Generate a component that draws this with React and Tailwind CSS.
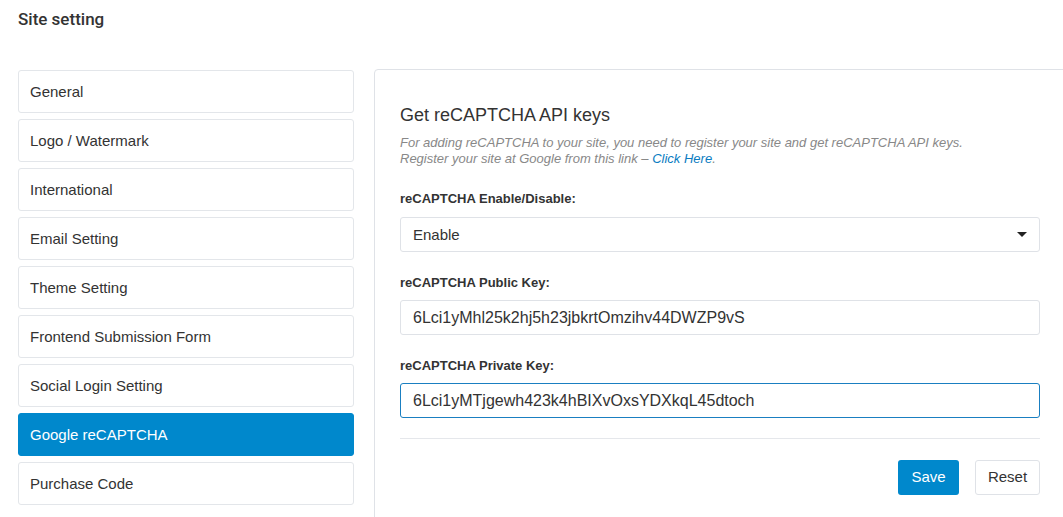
import { useState } from 'react'

const menu = [
  'General',
  'Logo / Watermark',
  'International',
  'Email Setting',
  'Theme Setting',
  'Frontend Submission Form',
  'Social Login Setting',
  'Google reCAPTCHA',
  'Purchase Code',
]

export default function App() {
  const [active, setActive] = useState('Google reCAPTCHA')
  const [enabled, setEnabled] = useState('Enable')
  const [publicKey, setPublicKey] = useState('6Lci1yMhl25k2hj5h23jbkrtOmzihv44DWZP9vS')
  const [privateKey, setPrivateKey] = useState('6Lci1yMTjgewh423k4hBIXvOxsYDXkqL45dtoch')

  return (
    <div className="w-[1063px] h-[517px] overflow-hidden bg-white font-['Liberation_Sans',Arial,sans-serif] text-[#333]">
      <h1 className="pl-[18px] pt-[8px] h-[69px] text-[17px] leading-[22px] font-medium font-['Roboto',sans-serif] text-[#333]">
        Site setting
      </h1>

      <div className="flex gap-[20px] pl-[18px]">
        {/* Menu */}
        <div className="w-[336px] shrink-0 flex flex-col gap-[6px] pt-[1px]">
          {menu.map((m) => (
            <button
              key={m}
              onClick={() => setActive(m)}
              className={`h-[43px] text-left pl-[11px] pt-[1px] text-[15px] rounded-[3px] border ${
                active === m
                  ? 'bg-[#0088cc] border-[#0088cc] text-white'
                  : 'bg-white border-[#e3e6ea] text-[#333]'
              }`}
            >
              {m}
            </button>
          ))}
        </div>

        {/* Panel */}
        <div className="w-[720px] shrink-0 h-[520px] border border-[#dfe2e7] rounded-[4px] pl-[25px] pt-[33px]">
          <div className="w-[640px]">
            <h2 className="text-[18px] leading-[24px] text-[#333]">Get reCAPTCHA API keys</h2>
            <p className="mt-[8px] text-[13px] leading-[16px] italic text-[#888]">
              For adding reCAPTCHA to your site, you need to register your site and get reCAPTCHA API keys.
              <br />
              Register your site at Google from this link – <a href="#" className="text-[#0a7cc1]">Click Here</a>.
            </p>

            <label className="block mt-[23px] text-[13px] leading-[18px] font-bold">reCAPTCHA Enable/Disable:</label>
            <div className="relative mt-[9px]">
              <select
                value={enabled}
                onChange={(e) => setEnabled(e.target.value)}
                className="appearance-none w-full h-[35px] border border-[#dfe2e7] rounded-[3px] pl-[12px] pt-[1px] text-[15px] text-[#333] bg-white outline-none"
              >
                <option>Enable</option>
                <option>Disable</option>
              </select>
              <span className="pointer-events-none absolute right-[13px] top-[15px] w-0 h-0 border-l-[5px] border-r-[5px] border-t-[5px] border-l-transparent border-r-transparent border-t-[#222]" />
            </div>

            <label className="block mt-[22px] text-[13px] leading-[18px] font-bold">reCAPTCHA Public Key:</label>
            <input
              value={publicKey}
              onChange={(e) => setPublicKey(e.target.value)}
              className="block mt-[8px] w-full h-[35px] border border-[#dfe2e7] rounded-[3px] pl-[12px] text-[16px] text-[#333] outline-none"
            />

            <label className="block mt-[22px] text-[13px] leading-[18px] font-bold">reCAPTCHA Private Key:</label>
            <input
              value={privateKey}
              onChange={(e) => setPrivateKey(e.target.value)}
              className="block mt-[8px] w-full h-[35px] border border-[#1a7fc1] rounded-[3px] pl-[12px] text-[16px] text-[#333] outline-none"
            />

            <div className="mt-[20px] border-t border-[#e5e7eb]" />

            <div className="mt-[21px] flex justify-end gap-[16px]">
              <button className="h-[35px] w-[61px] rounded-[3px] bg-[#0088cc] text-white text-[15px]">Save</button>
              <button className="h-[35px] w-[65px] rounded-[3px] border border-[#dfe2e7] bg-white text-[#333] text-[15px]">Reset</button>
            </div>
          </div>
        </div>
      </div>
    </div>
  )
}
